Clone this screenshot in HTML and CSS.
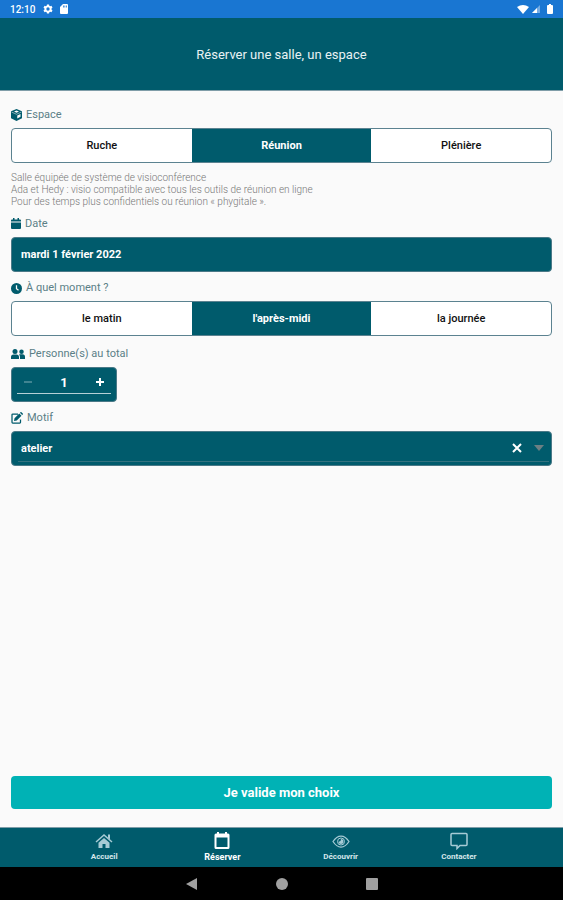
FILE: index.html
```html
<!DOCTYPE html>
<html lang="fr">
<head>
    <meta charset="UTF-8">
    <meta name="viewport" content="width=device-width, initial-scale=1">
    <title>Réserver une salle, un espace</title>
    <link rel="stylesheet" href="styles.css">
</head>
<body>
    <div class="status-bar">
        <span class="time">12:10</span>
        <svg width="10" height="10" viewBox="0 0 24 24"><path fill="#fff" fill-rule="evenodd" d="M9.500 1h5l.7 3.200 2 1.100 3.100-1 2.500 4.400-2.400 2.200v2.300l2.400 2.200-2.500 4.400-3.100-1-2 1.100-.7 3.100h-5l-.7-3.100-2-1.100-3.100 1-2.500-4.400 2.400-2.200v-2.300L1.200 8.700l2.500-4.400 3.100 1 2-1.100zM12 8a4 4 0 1 0 0 8 4 4 0 0 0 0-8z"/></svg>
        <svg class="sd" width="8" height="10" viewBox="0 0 16 20"><path fill="#fff" fill-rule="evenodd" d="M6 0h8a2 2 0 0 1 2 2v16a2 2 0 0 1-2 2H2a2 2 0 0 1-2-2V6zM6 3v4h1.500V3zm3 0v4h1.500V3zm3 0v4h1.500V3z"/></svg>
        <span class="spacer"></span>
        <svg width="12" height="9" viewBox="0 0 24 18"><path fill="#fff" d="M12 18L0 4q12-8 24 0z"/></svg>
        <svg width="8" height="8" viewBox="0 0 16 16"><path fill="#fff" fill-opacity=".4" d="M0 16L16 0v16z"/><path fill="#fff" d="M0 16L10 6v10z"/></svg>
        <svg class="battery" width="6" height="10" viewBox="0 0 12 20"><path fill="#fff" d="M4 0h4v2h2a2 2 0 0 1 2 2v14a2 2 0 0 1-2 2H2a2 2 0 0 1-2-2V4a2 2 0 0 1 2-2h2z"/></svg>
    </div>

    <header>
        <h1>Réserver une salle, un espace</h1>
    </header>

    <main>
        <form id="bookingForm">
            <div class="field" role="radiogroup" aria-labelledby="espaceTitle">
                <div class="title" id="espaceTitle">
                    <svg width="11" height="12" viewBox="0 0 22 24"><path fill="#005b6c" d="M11 0l11 4.500v14L11 24 0 18.500v-14z"/><path fill="#fafafa" d="M11 3l5 2-5 2.300L6 5zM12.500 13l6.500-3v5.500l-6.500 3.500z"/><path d="M1 6l10 4.500L21 6" fill="none" stroke="#fafafa" stroke-width="1"/></svg>
                    Espace
                </div>
                <div class="segment">
                    <label><input type="radio" name="espace"><span>Ruche</span></label>
                    <label><input type="radio" name="espace" checked><span>Réunion</span></label>
                    <label><input type="radio" name="espace"><span>Plénière</span></label>
                </div>
            </div>
            <p class="description">
                Salle équipée de système de visioconférence<br>
                Ada et Hedy : visio compatible avec tous les outils de réunion en ligne<br>
                Pour des temps plus confidentiels ou réunion « phygitale ».
            </p>

            <div class="field">
                <label class="title" for="date">
                    <svg width="10" height="12" viewBox="0 0 20 24"><path fill="#005b6c" d="M0 7V5a2 2 0 0 1 2-2h2V0h3v3h6V0h3v3h2a2 2 0 0 1 2 2v2zM0 9h20v11a2 2 0 0 1-2 2H2a2 2 0 0 1-2-2z"/></svg>
                    Date
                </label>
                <div class="box"><input type="text" id="date" value="mardi 1 février 2022" readonly></div>
            </div>

            <div class="field" role="radiogroup" aria-labelledby="momentTitle">
                <div class="title" id="momentTitle">
                    <svg width="11" height="11" viewBox="0 0 22 22"><circle cx="11" cy="11" r="11" fill="#005b6c"/><path d="M11 4.500v7l4 3" fill="none" stroke="#fafafa" stroke-width="2.500"/></svg>
                    À quel moment ?
                </div>
                <div class="segment">
                    <label><input type="radio" name="moment"><span>le matin</span></label>
                    <label><input type="radio" name="moment" checked><span>l'après-midi</span></label>
                    <label><input type="radio" name="moment"><span>la journée</span></label>
                </div>
            </div>

            <div class="field">
                <label class="title" for="personnes">
                    <svg width="14" height="10" viewBox="0 0 28 20"><g fill="#005b6c"><circle cx="8" cy="5" r="5"/><circle cx="21" cy="5.500" r="4.500"/><path d="M0 20v-4q0-5 5-5h6q5 0 5 5v4zM18 20v-4q0-3-2-5 1-.5 2-.5h5q5 0 5 5V20z"/></g></svg>
                    Personne(s) au total
                </label>
                <div class="box stepper">
                    <div class="stepper-row">
                        <button type="button" id="minus" aria-label="Moins" disabled><svg width="10" height="10" viewBox="0 0 10 10"><path d="M1 5h8" stroke="#fff" stroke-width="2"/></svg></button>
                        <input type="text" id="personnes" inputmode="numeric" value="1">
                        <button type="button" id="plus" aria-label="Plus"><svg width="10" height="10" viewBox="0 0 10 10"><path d="M1 5h8M5 1v8" stroke="#fff" stroke-width="2"/></svg></button>
                    </div>
                </div>
            </div>

            <div class="field">
                <label class="title" for="motif">
                    <svg width="12" height="12" viewBox="0 0 24 24"><path d="M14 4H3.500A1.500 1.500 0 0 0 2 5.500v15A1.500 1.500 0 0 0 3.500 22h14a1.500 1.500 0 0 0 1.500-1.500V15" fill="none" stroke="#005b6c" stroke-width="2.500"/><path fill="#005b6c" d="M6 18l1-5.500L16.500 3l4.500 4.500L11.500 17zM17.800 1.700l1.200-1.200q1-1 2 0l2.500 2.500q1 1 0 2l-1.200 1.200z"/></svg>
                    Motif
                </label>
                <div class="box select-box">
                    <div class="select-row">
                        <select id="motif">
                            <option value=""></option>
                            <option value="atelier" selected>atelier</option>
                        </select>
                        <button type="button" id="clear" aria-label="Effacer"><svg width="10" height="10" viewBox="0 0 10 10"><path d="M1 1l8 8M9 1L1 9" stroke="#fff" stroke-width="2"/></svg></button>
                        <svg width="10" height="6" viewBox="0 0 10 6"><path d="M0 0h10L5 6z" fill="#6b7f83"/></svg>
                    </div>
                </div>
            </div>
        </form>

        <button class="submit" type="submit" form="bookingForm">Je valide mon choix</button>
    </main>

    <nav class="tabs">
        <a href="#accueil">
            <svg width="18" height="18" viewBox="0 0 36 36"><path d="M2 20L18 6l16 14" fill="none" stroke="#a6cbd5" stroke-width="3"/><path fill="#a6cbd5" d="M26 5h4v10l-4-3.500zM18 12l11 9.500V32h-8v-8h-6v8H7V21.500z"/></svg>
            Accueil
        </a>
        <a href="#reserver" class="active">
            <svg width="18" height="18" viewBox="0 0 36 36"><path fill="#fff" fill-rule="evenodd" d="M8 0h4v3h12V0h4v3h2a3 3 0 0 1 3 3v25a3 3 0 0 1-3 3H6a3 3 0 0 1-3-3V6a3 3 0 0 1 3-3h2zM7 11v19h22V11z"/></svg>
            Réserver
        </a>
        <a href="#decouvrir">
            <svg width="18" height="18" viewBox="0 0 36 36"><path d="M2 19Q9 8 18 8t16 11Q27 30 18 30T2 19z" fill="none" stroke="#a6cbd5" stroke-width="2.500"/><circle cx="18" cy="19" r="7" fill="none" stroke="#a6cbd5" stroke-width="2"/><path fill="#a6cbd5" d="M18 14a5 5 0 1 1-5 5q5 1 5-5z"/></svg>
            Découvrir
        </a>
        <a href="#contacter">
            <svg width="18" height="18" viewBox="0 0 36 36"><path d="M4 3h28q2 0 2 2v20q0 2-2 2H20l-6 6v-6H4q-2 0-2-2V5q0-2 2-2z" fill="none" stroke="#a6cbd5" stroke-width="3"/></svg>
            Contacter
        </a>
    </nav>

    <div class="system-nav">
        <button type="button" aria-label="Retour"><svg width="12" height="12" viewBox="0 0 12 12"><path fill="#a0a0a0" d="M0 6l11-6v12z"/></svg></button>
        <button type="button" aria-label="Écran d'accueil"><svg width="12" height="12" viewBox="0 0 12 12"><circle cx="6" cy="6" r="6" fill="#a0a0a0"/></svg></button>
        <button type="button" aria-label="Applications récentes"><svg width="12" height="12" viewBox="0 0 12 12"><rect width="12" height="12" rx="1" fill="#a0a0a0"/></svg></button>
    </div>

    <script>
        const personnes = document.getElementById('personnes');
        const minus = document.getElementById('minus');

        function changeCount(step) {
            const count = Math.max(1, (parseInt(personnes.value, 10) || 1) + step);
            personnes.value = count;
            minus.disabled = count === 1;
        }

        minus.addEventListener('click', () => changeCount(-1));
        document.getElementById('plus').addEventListener('click', () => changeCount(1));
        document.getElementById('clear').addEventListener('click', () => {
            document.getElementById('motif').value = '';
        });
        document.getElementById('bookingForm').addEventListener('submit', (e) => e.preventDefault());
    </script>
</body>
</html>
```
FILE: styles.css
```css
* {
    box-sizing: border-box;
}

body {
    margin: 0;
    min-height: 100vh;
    display: flex;
    flex-direction: column;
    font-family: Roboto, "Liberation Sans", sans-serif;
    background: #fafafa;
}

svg {
    display: block;
    flex: none;
}

button,
input,
select {
    font-family: inherit;
    color: inherit;
    background: none;
    border: none;
    padding: 0;
    margin: 0;
}

button {
    cursor: pointer;
}

.status-bar {
    display: flex;
    align-items: center;
    gap: 3px;
    height: 18px;
    padding: 0 10px;
    background: #1976d2;
    color: #fff;
}

.time {
    font-size: 10px;
    font-weight: 500;
    margin-right: 5px;
}

.sd,
.battery {
    margin-left: 4px;
}

.spacer {
    flex: 1;
}

header {
    display: flex;
    align-items: center;
    justify-content: center;
    height: 73px;
    background: #005b6c;
    border-bottom: 1px solid #7f9da8;
    color: #e8f2f4;
}

h1 {
    margin: 0;
    font-size: 13px;
    font-weight: 400;
}

main {
    flex: 1;
    display: flex;
    flex-direction: column;
    justify-content: space-between;
    padding: 15px 11px 18px;
}

form {
    display: flex;
    flex-direction: column;
    gap: 7px;
}

.field {
    display: flex;
    flex-direction: column;
    gap: 4px;
}

.title {
    display: flex;
    align-items: center;
    gap: 4px;
    font-size: 11px;
    line-height: 18px;
    font-weight: 400;
    color: #5b7f87;
}

.segment {
    display: flex;
    height: 35px;
    margin-bottom: 2px;
    border: 1px solid #5b8290;
    border-radius: 4px;
    overflow: hidden;
    background: #fff;
}

.segment label {
    flex: 1;
    display: flex;
    cursor: pointer;
}

.segment input {
    appearance: none;
    width: 0;
}

.segment span {
    flex: 1;
    display: flex;
    align-items: center;
    justify-content: center;
    font-size: 11px;
    font-weight: 500;
    color: #111;
}

.segment input:checked + span {
    background: #005b6c;
    color: #fff;
    font-weight: 700;
}

.description {
    margin: 0;
    font-size: 10px;
    line-height: 12px;
    font-weight: 300;
    color: #777;
}

.box {
    display: flex;
    height: 35px;
    padding: 0 9px;
    border: 1px solid #4a7987;
    border-radius: 4px;
    background: #005b6c;
    color: #fff;
}

.box input,
.box select {
    flex: 1;
    min-width: 0;
    font-size: 11px;
    font-weight: 700;
    appearance: none;
}

.stepper {
    width: 106px;
    padding: 3px 5px 7px;
}

.stepper-row {
    flex: 1;
    min-width: 0;
    display: flex;
    align-items: center;
    padding: 0 6px;
    border-bottom: 1px solid #b5d0d6;
}

.stepper input {
    font-size: 13px;
    text-align: center;
}

.stepper button:disabled {
    opacity: 0.25;
}

.select-box {
    padding: 3px 2px 3px 6px;
}

.select-row {
    flex: 1;
    display: flex;
    align-items: center;
    gap: 12px;
    padding: 0 5px 0 3px;
    border-bottom: 1px solid #33727f;
}

.submit {
    height: 33px;
    border-radius: 4px;
    background: #00b2b5;
    color: #fff;
    font-size: 13px;
    font-weight: 700;
}

.tabs {
    display: flex;
    height: 40px;
    padding: 0 45px;
    background: #005b6c;
    border-top: 1px solid #7f9da8;
}

.tabs a {
    flex: 1;
    display: flex;
    flex-direction: column;
    align-items: center;
    padding-top: 4px;
    gap: 1px;
    font-size: 8px;
    line-height: 12px;
    font-weight: 700;
    color: #d5e6ea;
    text-decoration: none;
}

.tabs .active {
    font-size: 9px;
    color: #fff;
}

.system-nav {
    display: flex;
    align-items: center;
    justify-content: center;
    gap: 78px;
    height: 33px;
    background: #000;
}
```
